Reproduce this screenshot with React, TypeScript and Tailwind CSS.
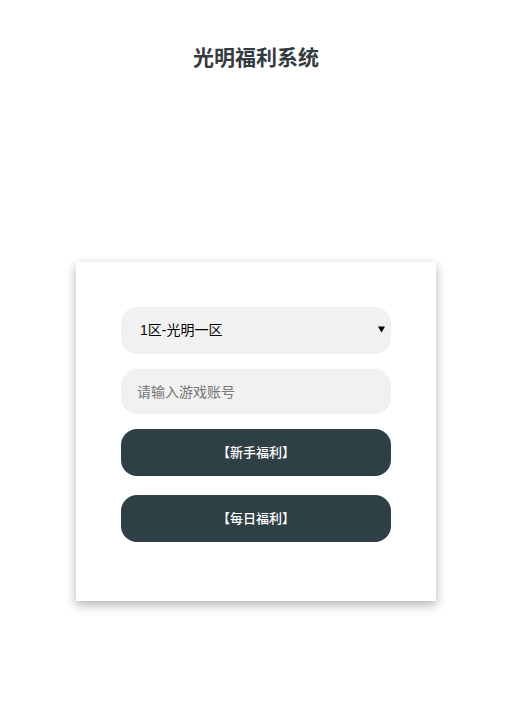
import React from "react";

export default function App() {
  const font = { fontFamily: '"Liberation Sans", "Noto Sans CJK SC", sans-serif' };
  return (
    <div className="min-h-[707px] w-[512px] bg-white flex flex-col items-center" style={font}>
      <h1 className="pt-[44px] text-[21px] leading-7 font-bold text-[#333b40]">光明福利系统</h1>
      <div className="mt-[190px] w-[360px] bg-white px-[45px] pt-[45px] pb-[59px] shadow-[0_4px_10px_rgba(0,0,0,0.3)] flex flex-col">
        <div className="relative">
          <select className="appearance-none w-full h-[47px] rounded-[16px] bg-[#f1f1f1] pl-[19px] pr-[30px] text-[14px] text-black outline-none">
            <option>1区-光明一区</option>
          </select>
          <svg className="absolute right-[6px] top-[19px] pointer-events-none" width="7" height="7" viewBox="0 0 7 7">
            <path d="M0 0.5 H7 L3.5 6.5 Z" fill="#000" />
          </svg>
        </div>
        <input
          className="mt-[15px] w-full h-[45px] rounded-[16px] bg-[#f1f1f1] px-[16px] text-[14px] text-black outline-none placeholder:text-[#757575]"
          placeholder="请输入游戏账号"
        />
        <button className="mt-[15px] w-full h-[47px] rounded-[16px] bg-[#2f3f46] text-white text-[13px] font-medium">
          【新手福利】
        </button>
        <button className="mt-[19px] w-full h-[47px] rounded-[16px] bg-[#2f3f46] text-white text-[13px] font-medium">
          【每日福利】
        </button>
      </div>
    </div>
  );
}
